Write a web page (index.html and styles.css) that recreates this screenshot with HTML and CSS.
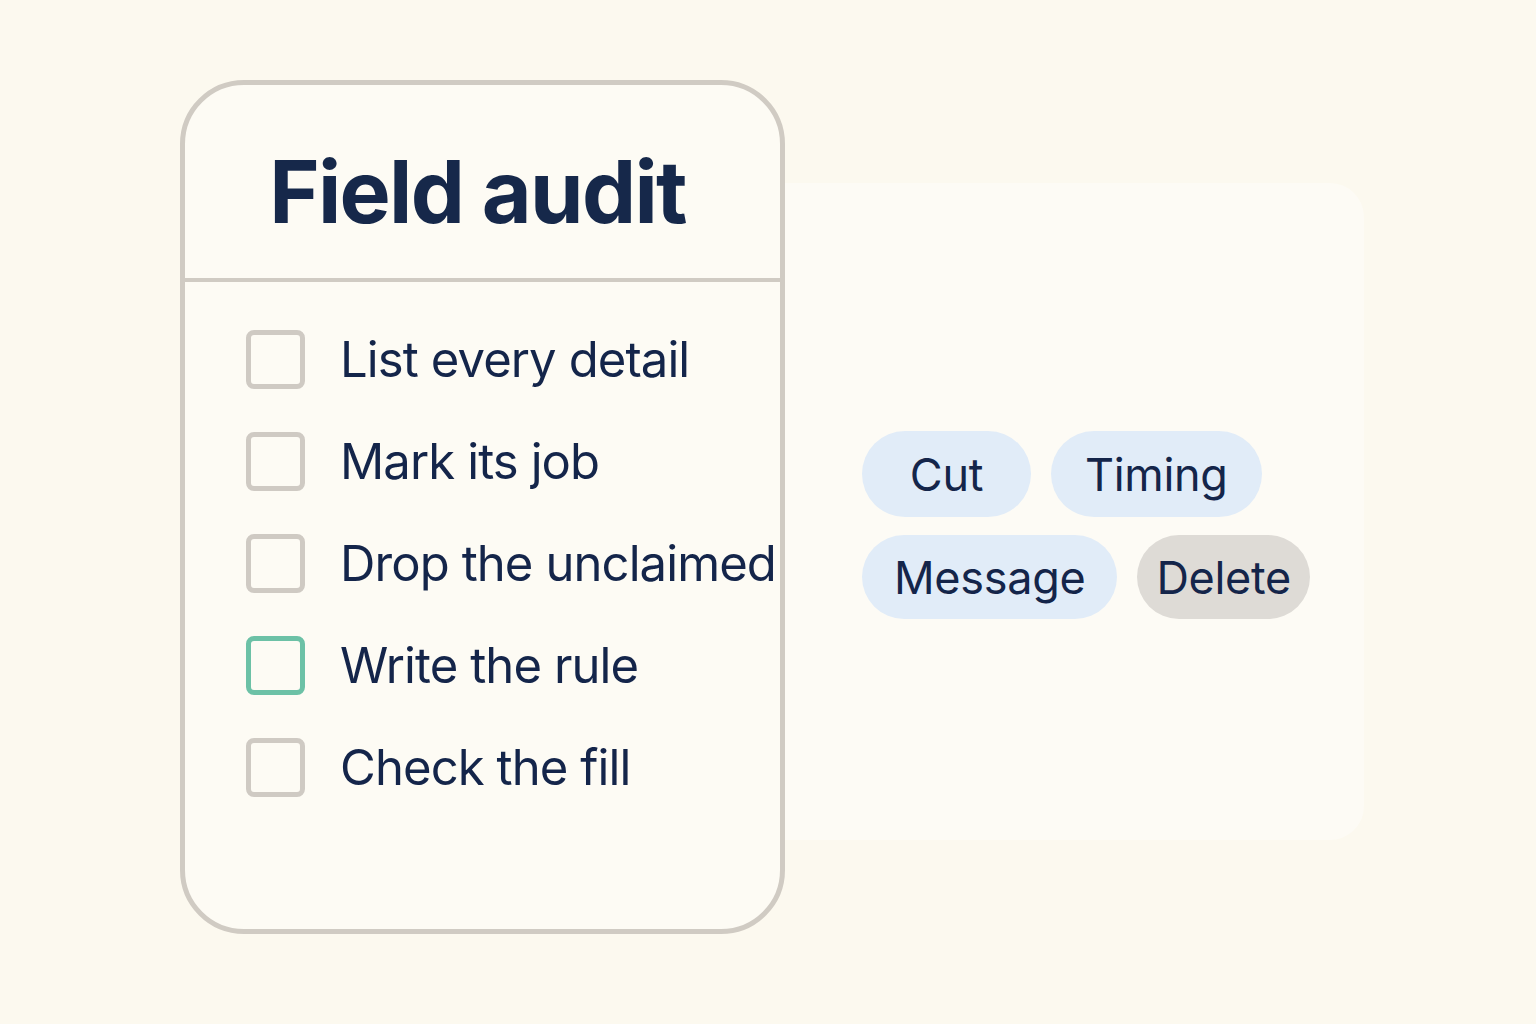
FILE: index.html
```html
<!DOCTYPE html>
<html lang="en">
  <head>
    <meta charset="UTF-8" />
    <meta name="viewport" content="width=device-width, initial-scale=1.0" />
    <title>Field audit</title>
    <link rel="stylesheet" href="styles.css">
  </head>
  <body>
    <div class="stage">
      <div class="card">
        <div class="card-header">
          <h1>Field audit</h1>
        </div>
        <ul class="checklist">
          <li class="check-item"><span class="box"></span>List every detail</li>
          <li class="check-item"><span class="box"></span>Mark its job</li>
          <li class="check-item"><span class="box"></span>Drop the unclaimed</li>
          <li class="check-item"><span class="box box-active"></span>Write the rule</li>
          <li class="check-item"><span class="box"></span>Check the fill</li>
        </ul>
      </div>

      <div class="panel">
        <div class="chips">
          <span class="chip chip-cut">Cut</span>
          <span class="chip">Timing</span>
          <span class="chip chip-message">Message</span>
          <span class="chip chip-delete">Delete</span>
        </div>
      </div>
    </div>
  </body>
</html>
```

FILE: styles.css
```css
body {
  margin: 0;
  background-color: #fcf9ef;
  font-family: Inter, 'Noto Sans', sans-serif;
  color: #14254a;
}
.stage {
  display: flex;
  align-items: flex-start;
  padding: 80px 0 0 180px;
}
/* Checklist card */
.card {
  width: 605px;
  height: 854px;
  box-sizing: border-box;
  border: 5px solid #d0cbc3;
  border-radius: 64px;
  background-color: #fdfbf4;
  position: relative;
  z-index: 1;
}
.card-header {
  height: 193px;
  border-bottom: 4px solid #d0cbc3;
  display: flex;
  align-items: center;
  justify-content: center;
}
.card-header h1 {
  margin: 20px 10px 0 0;
  font-size: 86px;
  font-weight: 700;
  letter-spacing: -1.7px;
  color: #16284a;
}
.checklist {
  list-style: none;
  margin: 0;
  padding: 48px 0 0 61px;
  display: flex;
  flex-direction: column;
  gap: 44px;
}
.check-item {
  display: flex;
  align-items: center;
  gap: 35px;
  height: 58px;
  font-size: 49px;
  letter-spacing: -0.9px;
  white-space: nowrap;
}
.box {
  width: 59px;
  height: 59px;
  box-sizing: border-box;
  border: 5px solid #cfcac3;
  border-radius: 8px;
  flex-shrink: 0;
}
.box-active {
  border-color: #6cc1a6;
}
/* Side panel with chips */
.panel {
  margin-top: 103px;
  width: 579px;
  height: 657px;
  box-sizing: border-box;
  background-color: #fdfbf5;
  border-radius: 0 34px 34px 0;
  padding: 248px 0 0 77px;
}
.chips {
  width: 480px;
  display: flex;
  flex-wrap: wrap;
  gap: 18px 20px;
}
.chip {
  height: 86px;
  padding: 0 34px;
  display: flex;
  align-items: center;
  justify-content: center;
  border-radius: 43px;
  background-color: #e1ecf8;
  font-size: 45px;
  letter-spacing: -0.3px;
}
.chip-cut {
  min-width: 101px;
}
.chip-message {
  height: 84px;
  padding: 0 32px;
}
.chip-delete {
  height: 84px;
  padding: 0 19px;
  background-color: #dedbd6;
}
```
